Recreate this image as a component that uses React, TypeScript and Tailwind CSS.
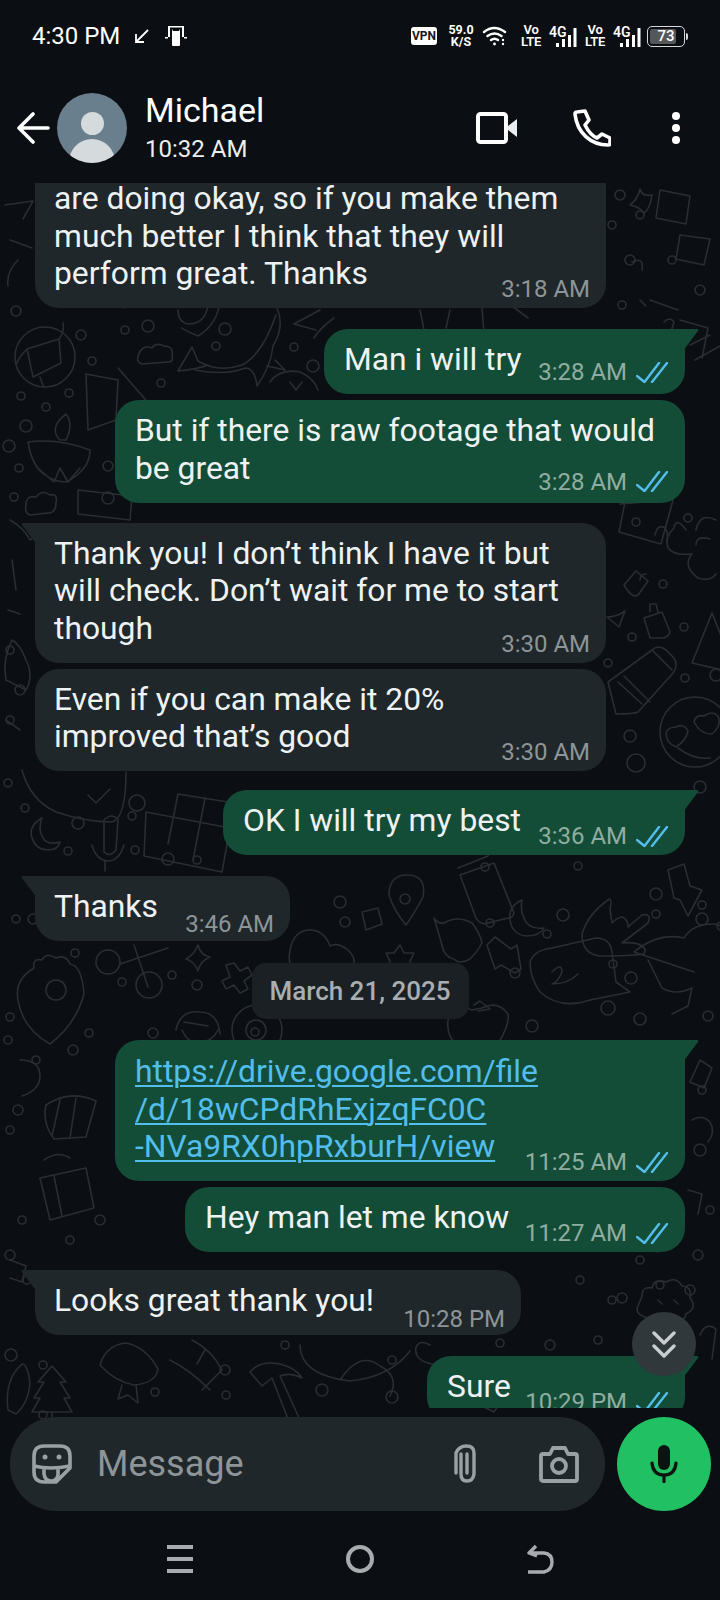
import { ReactNode } from 'react';

const rings: [number, number, number][] = [
  [16, 311, 5], [81, 335, 5], [92, 361, 4], [148, 326, 6], [125, 330, 4], [161, 383, 4], [225, 329, 6], [216, 346, 4], [294, 347, 4], [313, 366, 6],
  [21, 396, 4], [69, 393, 4], [46, 407, 4], [26, 426, 6], [9, 446, 6], [19, 468, 4], [14, 497, 4], [108, 466, 5], [108, 498, 6],
  [8, 783, 4], [25, 808, 4], [78, 823, 6], [68, 851, 4], [137, 803, 8], [132, 816, 4], [135, 850, 4], [168, 859, 6], [197, 860, 4],
  [16, 919, 4], [33, 919, 5], [75, 953, 4], [340, 902, 6], [345, 922, 5], [122, 982, 4], [172, 975, 4], [197, 985, 5], [10, 1017, 4], [89, 1033, 4], [73, 1050, 5],
  [8, 1040, 4], [153, 1033, 5], [255, 1032, 4], [485, 867, 4], [578, 866, 4], [563, 915, 6], [547, 934, 4], [490, 923, 4], [656, 894, 6], [656, 914, 4], [702, 919, 6], [702, 905, 4],
  [613, 964, 4], [631, 978, 6], [515, 973, 5], [708, 1016, 5], [608, 1008, 7], [640, 1019, 6], [532, 1026, 6], [721, 926, 4], [673, 1050, 4],
  [636, 522, 4], [688, 518, 4], [663, 584, 4], [684, 627, 4], [632, 637, 4], [608, 663, 4], [685, 678, 4], [630, 736, 6], [636, 763, 9], [700, 787, 6], [716, 675, 6],
  [612, 1300, 4], [690, 1290, 5], [550, 1345, 5], [598, 1340, 4], [622, 1298, 5], [11, 1355, 6], [43, 1365, 4], [43, 1415, 4], [155, 1392, 4], [225, 1370, 5], [226, 1395, 4], [285, 1345, 4],
  [322, 1390, 6], [392, 1397, 6], [518, 1370, 4], [392, 1360, 4], [500, 1343, 4], [27, 1280, 4], [10, 1255, 5], [10, 1130, 4], [36, 1060, 4], [18, 1110, 5], [100, 1220, 5], [22, 1220, 4], [70, 1240, 4],
  [702, 1090, 4], [700, 1150, 6], [710, 1210, 4], [698, 1255, 5], [660, 1285, 4], [580, 1280, 4], [640, 1260, 4], [620, 195, 5], [640, 215, 4], [630, 260, 5], [672, 260, 4], [700, 290, 5],
  [612, 225, 4], [622, 305, 4], [10, 650, 4], [20, 690, 5], [10, 720, 4],
];

const doodles = [
  // globe
  'M15 357a30 30 0 1 0 60 0a30 30 0 1 0-60 0M27 349l32-10M27 349l6 28 M33 377l28-14M59 339l2 24M27 349q-8 8-10 14M59 339q6-8 4-16M40 377q2 6 4 10',
  // whale
  'M178 371l14-24l6 14q20 12 44 4q20-10 34-50M178 371q20-2 30-6M195 370q30 6 50-2q10 0 12 18q14-20 16-40q12-20 4-38M275 360l10 10l-18-4',
  // sail + cloud
  'M138 356q4-12 14-8q4-6 12-2q10 0 8 10q2 6-4 6l-26 2q-6-2-4-8z',
  'M86 374l32 6l-2 40l-28 10z M118 368l40 46l-40 6',
  // lamp
  'M28 442q30-4 62 8q0 20-24 32q-12 0-22-8q-12-8-16-32zM60 440q-12-12 6-26q8 10 0 26zM40 470l14 12l6-14l8 14l12-14',
  // cloud + ticket
  'M26 505q0-10 10-8q6-8 14-2q8-2 6 8q0 10-8 10l-18 2q-6-2-4-10z',
  'M78 490l54 6l-2 24l-52-6z',
  // moon, mic, grid
  'M42 818q-14 8-10 20q4 12 16 12q10 0 12-8q-14 4-18-6q-4-8 0-18z',
  'M104 820q8-8 14 0l-2 30q-6 8-12 2zM92 845q4 16 18 16q10-2 14-16M105 861v10',
  'M146 812l84 16l-8 44l-78-16zM178 794l-10 50M205 798l-12 62M178 794l50 8',
  // blob with check
  'M22 770q8 30 34 42q30 10 56 10q14-4 14-50M88 795l8 8l14-14',
  // paw + shield
  'M18 1000q-4-20 16-32q-2-10 8-8q4-8 14-2q10-4 14 6q12 2 14 30q-8 30-34 50q-28-16-32-44z',
  'M46 990a10 10 0 1 0 20 0a10 10 0 1 0-20 0',
  // scissors
  'M96 962a12 12 0 1 0 24 0a12 12 0 1 0-24 0M120 964l48-16M134 945l14 42M136 985a13 13 0 1 0 26 0a13 13 0 1 0-26 0',
  // sparkle + cross
  'M198 945q2 10 12 12q-10 4-12 14q-4-10-12-12q8-4 12-14z',
  'M226 965l8-2l6 8l8-4l4 8l-8 6l4 8l-8 4l-6-8l-8 4l-4-8l8-4z',
  // face
  'M176 1030q4-20 24-18q18 0 20 22M182 1030q6 14 18 12q12 0 18-12M184 1022l24 4',
  'M232 1030a20 20 0 1 0 50 0a20 20 0 1 0-50 0M246 1030a10 10 0 1 0 20 0a10 10 0 1 0-20 0',
  // dumplings
  'M290 950q4-20 20-20q14 0 20 16q8-4 18 4q10 10 4 18l-50 6q-16-4-12-24z',
  // pin, bottle, gift, star
  'M389 895q0-20 18-20q20 0 16 22q-6 12-17 28q-12-14-17-30zM400 899a5 5 0 1 0 10 0a5 5 0 1 0-10 0',
  'M460 875l34-12l20 50q-2 6-6 5l-24 6q-6-2-8-6zM458 868l30-12q2-4 0-6',
  'M434 918q4 6 10 5q14-8 28 0q8 10 10 20q-4 8-12 16q-10 6-16 0q-10-2-12-14q-4-14-8-27z',
  'M400 945l4 8h10l-4 8l4 8h-10l-4 8l-6-8h-8l4-8l-4-8h8z',
  'M362 912l16-4l4 16l-16 6z',
  // moon, rock hand
  'M522 900q-14 6-12 20q2 14 16 16q14 0 18-8q-16 2-20-10q-4-8-2-18z',
  'M608 900q-20 14-26 34q0 20 18 22q30 0 44-2q4-6-6-10q-8-2-16-1l26-20q4-10-6-8l-14 12q0-8-6-10q-4 0-10 6l-2-14q2-8 0-10z',
  // lightning
  'M668 870l16-6l6 22l12 4l-14 26l-8-16l-6-2z',
  // cap head
  'M634 952q24-20 50-14q8-14 30-14q10 0 12 16M634 952l60 20M648 960l14 28q14 8 30 0l-4 18l-16 8',
  // pin tack
  'M487 945l8-8l16 12l6-4l4 24l-6 4l-14-8l-6 4z',
  // speech
  'M530 962q4-12 22-14l44-10q14 0 16 14l4 30l14 10l-40 8q-30 10-50-8q-10-14-10-30z M552 972q10-10 10 0q-4 10-10 12q16 0 26-10',
  // apple
  'M472 1010q-16-8-24 10q-2 20 14 28q10 0 14-4q10 8 22 0q12-20 10-30q-10-14-26-6zM474 1005l6-4l10 8l-12 2',
  // house
  'M625 502l-6 30l42 12l12-44M655 535q2-10 8-8q6 2 4 16M620 504l50-4',
  // flower
  'M686 530q-10-14-12-2q-10 10-6 20q6 8 24 6q-10 12 6 24q12 4 18-4M696 530q4-18 20-10M696 545q0-10 14-6',
  // lock + perfume
  'M624 585l12-14l12 10l-10 14q-6 4-14-10zM640 580q0-6 6-6',
  'M644 618l18-6l8 20q-2 6-8 6l-12 0zM650 612v-8h6l2 8',
  'M607 617q10 0 18-6l-6 16z',
  // pencil
  'M608 682l44-32q6-6 14 0l8 8q4 6 0 14l-36 40q-4 2-22 2zM618 682l24 22M624 676l26 26M652 650l20 20',
  // smile hearts
  'M660 732a35 35 0 1 0 70 0a35 35 0 1 0-70 0M666 733q2-6 10-6q8-4 12 4q-2 10-12 16q-10-4-10-14zM694 722q2-8 10-6q8-6 14 0q4 10-6 18q-12 0-18-12zM678 748q16 12 32 10',
  // triangle
  'M692 663l20-50l24 60z',
  // shrimp, tree, hammer
  'M100 1365q6-20 26-22q20 4 32 26q-2 14-24 16q-20-4-34-20zM122 1385l-4 14l10-4l10 8l-2-18',
  'M38 1382l14-16l14 16h-6l10 16h-6l8 14h-40l8-14h-6l10-16h-6zM52 1412v6',
  'M250 1372q10-12 30-8q16 4 22 14q-12-6-22-2l20 44l-10 4l-18-46l-10 8z',
  'M192 1340q20 10 30 30l-20 20M205 1350l-8 14M170 1360q20 10 40 30',
  'M8 1410q-4-30 14-46q6 0 8 20q-2 20-14 30z',
  'M340 1380q20-30 40-14q20 10 10 30M300 1345q0 30 50 36q40-4 60-30',
  'M430 1345q-10-6-14 2q-2 12 12 16q10 4 20-4',
  'M470 1400l24-36l24 12l-24 36z',
  'M642 1296q0-10 10-8q2-10 14-6q10-6 16 4q10 0 8 12q8 10-4 16q-2 10-14 8q-14 10-24-4q-14-4-10-12z',
  'M658 1300l4 4M674 1300l4 4M662 1316q8 4 14 0',
  'M700 1335q6-14 16-6l-4 30',
  // taco + book left side
  'M46 1105q24-16 50-4l-10 36l-32 2q-12-16-8-34zM60 1100l-8 36M76 1098l-6 40',
  'M40 1178l46-10l8 40l-44 12zM54 1176l8 40M44 1160q14-10 26-2',
  'M20 1060q20 0 20 16q0 14-18 20',
  'M10 1260l16 6l-4 16l-12-4',
  // right side
  'M700 1060l12 8l-8 20l-14-6zM640 1050l10 4l2 10',
  'M692 1120q10-6 18 2q6 10-2 20',
  'M630 1205q14-12 24-4l8 12q-4 10-14 12q-14-6-18-20zM688 1190l14 4l-4 20',
  'M650 1240l16-6l4 12l-14 6z',
  // top band
  'M5 205l28-4l-10 18M10 240l22 8M18 260q-12 12-10 26M660 190l30 6l-4 28l-30-6zM680 235l30 4l-6 26l-28-6zM632 262q12-6 10 8M652 195q-2 14-8 18q-4-6-14-8q8-6 10-16q2 8 12 6z',
  'M680 320l28 8l-6 30M650 300l28 10M610 345q8 4 14-10M664 322q6-6 10 0l-6 20M690 345l20-10M695 360l25-14',
  'M220 300q-2 24-22 36q-14-6-16-8M178 310q0 12 10 14q18 0 20-20M334 318q-14 10-20 20M120 300l4 8l14-6M320 310l-26 14l22 6',
  'M270 382q10-14 30-10q14 6 18 18M290 382l6 8l6-8',
  'M420 310l4 20M450 310l-4 18M482 308l2 26M512 306l16 12',
  // middle strip
  'M30 540l14-10M10 520q14 8 20 20M12 640q-10 20-6 40l20 10q8-14 0-30q-6-16-14-20zM6 720l14 10M12 560l4 30M8 610l12 4',
  'M615 340l8 6M640 300l6 6',
];

function Doodles() {
  return (
    <svg
      className="absolute left-0 top-0 h-[1336px] w-[720px]"
      viewBox="0 183 720 1336"
      fill="none"
      stroke="#2a2e31"
      strokeWidth={1.6}
      strokeLinecap="round"
      strokeLinejoin="round"
    >
      {rings.map(([cx, cy, r], i) => (
        <circle key={i} cx={cx} cy={cy} r={r} />
      ))}
      {doodles.map((d, i) => (
        <path key={i} d={d} />
      ))}
    </svg>
  );
}

function Ticks() {
  return (
    <svg className="ml-[9px] h-[21px] w-[32px] shrink-0" viewBox="0 0 32 21" fill="none" stroke="#53bdeb" strokeWidth={2.4} strokeLinecap="round" strokeLinejoin="round">
      <path d="M1 14l7.5 6L23 1" />
      <path d="M16 20L31 1" />
    </svg>
  );
}

function Tail({ out }: { out?: boolean }) {
  if (out) {
    return (
      <svg className="absolute -right-[14px] top-0 h-[24px] w-[24px]" viewBox="0 0 24 24" fill="#144d37">
        <path d="M0 0h22q2 0 1 2L8 22q-4 3-8 2z" />
      </svg>
    );
  }
  return (
    <svg className="absolute -left-[14px] top-0 h-[24px] w-[24px]" viewBox="0 0 24 24" fill="#1f272a">
      <path d="M24 0H2Q0 0 1 2l15 20q4 3 8 2z" />
    </svg>
  );
}

function Bubble({
  out,
  tail,
  className,
  timeClass = 'mb-[4px]',
  time,
  children,
}: {
  out?: boolean;
  tail?: boolean;
  className: string;
  timeClass?: string;
  time: string;
  children: ReactNode;
}) {
  return (
    <div
      className={`relative flex shrink-0 items-end justify-between rounded-[24px] ${out ? 'ml-auto mr-[35px] bg-[#144d37] pl-5 pr-[17px]' : 'ml-[35px] bg-[#1f272a] pl-[19px] pr-[16px]'} ${tail ? (out ? 'rounded-tr-none' : 'rounded-tl-none') : ''} ${className}`}
    >
      {tail && <Tail out={out} />}
      <div className="min-w-0 flex-1 whitespace-nowrap pb-[15.5px] pt-3 text-[31.8px] leading-[37.5px] text-[#eef2f3]">{children}</div>
      <div className={`flex shrink-0 items-center ${timeClass}`}>
        <span className={`text-[24px] leading-[30px] ${out ? 'text-[#8fada1]' : 'text-[#8d9598]'}`}>{time}</span>
        {out && <Ticks />}
      </div>
    </div>
  );
}

function StatusBar() {
  return (
    <div className="flex h-[72px] items-center pl-[32px] pr-[32px] text-white">
      <span className="text-[24px] leading-none">4:30 PM</span>
      <svg className="ml-[14px] h-[16px] w-[16px]" viewBox="0 0 16 16" fill="none" stroke="white" strokeWidth={1.8}>
        <path d="M14 2L2 14M2 6v8h8" />
      </svg>
      <svg className="ml-[15px] h-[22px] w-[22px]" viewBox="0 0 22 22" fill="white">
        <path d="M3 1h16v1.5H3zM3 1h2v11H3zM17 1h2v11h-2zM0 12h3v1.5H0zM19 12h3v1.5h-3z" />
        <path d="M7 4l1 2h6l1-2v16q0 1-1 1H8q-1 0-1-1z" />
      </svg>
      <div className="ml-auto flex items-center">
        <span className="flex h-[18px] w-[26px] items-center justify-center rounded-[3px] bg-white text-[12px] font-bold leading-none text-[#15181b]">VPN</span>
        <div className="ml-[11px] w-[26px] text-center text-[12.5px] font-bold leading-[12px]">
          59.0
          <br />
          K/S
        </div>
        <svg className="ml-[8px] h-[20px] w-[25px]" viewBox="0 0 25 20" fill="none" stroke="white" strokeWidth={2.4} strokeLinecap="round">
          <path d="M2 6q10-8 21 0M5.5 10q7-5 14 0M9 14q3.5-2.5 7 0" />
          <circle cx={12.5} cy={18} r={1.4} fill="white" stroke="none" />
          <circle cx={21} cy={14} r={1.2} fill="white" stroke="none" />
          <circle cx={21} cy={18} r={1.2} fill="white" stroke="none" />
        </svg>
        <Signal className="ml-[14px]" />
        <Signal className="ml-[8px]" />
        <div className="ml-[6px] flex items-center">
          <div className="relative flex h-[21px] w-[38px] items-center rounded-[5px] border-[1.5px] border-[#d5d7d9] p-[2px]">
            <div className="h-full w-[26px] rounded-[2px] bg-[#55585b]" />
            <span className="absolute inset-0 flex items-center justify-center text-[15px] font-medium leading-none">73</span>
          </div>
          <div className="ml-[1px] h-[7px] w-[2px] rounded-r-sm bg-[#d5d7d9]" />
        </div>
      </div>
    </div>
  );
}

function Signal({ className }: { className: string }) {
  return (
    <div className={`flex items-end ${className}`}>
      <div className="w-[20px] text-center text-[13px] font-semibold leading-[12px] tracking-[-0.3px]">
        Vo
        <br />
        LTE
      </div>
      <div className="relative ml-[8px] h-[22px] w-[28px]">
        <span className="absolute left-0 top-0 text-[14px] font-semibold leading-[13px]">4G</span>
        <svg className="absolute bottom-0 right-0 h-[21px] w-[22px]" viewBox="0 0 22 21" fill="white">
          <rect x={1} y={16} width={3} height={4} />
          <rect x={7} y={12} width={3} height={8} />
          <rect x={13} y={8} width={3} height={12} />
          <rect x={18.5} y={1} width={3} height={19} />
        </svg>
      </div>
    </div>
  );
}

function Header() {
  return (
    <div className="flex h-[111px] items-start text-white">
      <svg className="ml-[17px] mt-[40px] h-[32px] w-[33px] shrink-0" viewBox="0 0 33 32" fill="none" stroke="white" strokeWidth={3.6} strokeLinecap="round" strokeLinejoin="round">
        <path d="M31 16H3M16 2L2 16l14 14" />
      </svg>
      <div className="relative ml-[7px] mt-[21px] h-[70px] w-[70px] shrink-0 overflow-hidden rounded-full bg-[#6a7f8d]">
        <div className="mx-auto mt-[19px] h-[23px] w-[23px] rounded-full bg-[#d5dadd]" />
        <div className="mx-auto mt-[4px] h-[40px] w-[46px] rounded-t-full bg-[#d5dadd]" />
      </div>
      <div className="ml-[18px] mt-[19px] flex flex-col">
        <span className="text-[34px] leading-[39px]">Michael</span>
        <span className="text-[24px] leading-[38px] text-[#eceeef]">10:32 AM</span>
      </div>
      <div className="ml-auto flex items-start">
        <svg className="mt-[40px] h-[32px] w-[41px]" viewBox="0 0 41 32" fill="none">
          <rect x={2} y={2} width={28} height={28} rx={2.5} stroke="white" strokeWidth={4} />
          <path d="M32 14l9-7v18l-9-7z" fill="#e8eef0" />
        </svg>
        <svg className="ml-[56px] mt-[37px] h-[38px] w-[38px]" viewBox="0 0 38 38" fill="none" stroke="white" strokeWidth={3.6} strokeLinejoin="round">
          <path d="M2 5q0-2 2-2l8-1l4 9l-4 5q5 10 12 13l5-4l8 4v6q0 1-2 1C18 36 4 24 2 5z" />
        </svg>
        <div className="ml-[61px] mr-[40px] mt-[40px] flex flex-col gap-[4px]">
          <div className="h-[8px] w-[8px] rounded-full bg-white" />
          <div className="h-[8px] w-[8px] rounded-full bg-white" />
          <div className="h-[8px] w-[8px] rounded-full bg-white" />
        </div>
      </div>
    </div>
  );
}

function Composer() {
  return (
    <div className="relative flex h-[94px] shrink-0 items-center pl-[10px]">
      <div className="flex h-full w-[595px] items-center rounded-[46px] bg-[#1f272a] text-[#8d9598]">
        <svg className="ml-[22px] h-[40px] w-[40px] shrink-0" viewBox="0 0 40 40" fill="none" stroke="#9aa1a4" strokeWidth={3.6} strokeLinejoin="round">
          <path d="M12 2h16q10 0 10 10v12L24 38H12Q2 38 2 28V12Q2 2 12 2z" />
          <path d="M2 22q16 4 36 0M12 24v6q1 7 7 7t7-6v-7" />
          <circle cx={13} cy={13} r={2.5} fill="#9aa1a4" stroke="none" />
          <circle cx={27} cy={13} r={2.5} fill="#9aa1a4" stroke="none" />
        </svg>
        <span className="ml-[25px] text-[36px] leading-none">Message</span>
        <svg className="ml-auto h-[40px] w-[27px] shrink-0" viewBox="0 0 27 40" fill="none" stroke="#9aa1a4" strokeWidth={3.4} strokeLinecap="round">
          <path d="M8 10v20q0 7 6 7t7-7V9q0-7-7.5-7T3 9v20" />
          <path d="M14 10v19" />
        </svg>
        <svg className="ml-[59px] mr-[26px] h-[37px] w-[40px] shrink-0" viewBox="0 0 40 37" fill="none" stroke="#9aa1a4" strokeWidth={3.8} strokeLinejoin="round">
          <path d="M2 10q0-2 2-2h7l3-6h12l3 6h7q2 0 2 2v23q0 2-2 2H4q-2 0-2-2z" />
          <circle cx={20} cy={20} r={7} />
        </svg>
      </div>
      <div className="ml-[12px] flex h-[94px] w-[94px] shrink-0 items-center justify-center rounded-full bg-[#21c063]">
        <svg className="h-[38px] w-[30px]" viewBox="0 0 30 38" fill="none" stroke="#0b1410" strokeWidth={3.2} strokeLinecap="round">
          <rect x={9} y={0} width={12} height={25} rx={6} fill="#0b1410" stroke="none" />
          <path d="M3 18q1 12 12 12t12-12M15 30v7" />
        </svg>
      </div>
    </div>
  );
}

export default function App() {
  return (
    <div className="flex h-[1600px] w-[720px] flex-col overflow-hidden bg-[#0b0e12] font-['Roboto',sans-serif]">
      <StatusBar />
      <Header />
      <div className="relative h-[1336px] shrink-0 bg-[#0b0e12]">
        <Doodles />
        <div className="relative flex h-[1225px] flex-col [clip-path:inset(-8px_0_0_0)]">
          <Bubble className="h-[125px] w-[571px] rounded-t-none" time="3:18 AM">
            <div className="-mt-[16px]">
              are doing okay, so if you make them
              <br />
              much better I think that they will
              <br />
              perform great. Thanks
            </div>
          </Bubble>
          <Bubble out tail className="mt-[21px] w-[361px]" timeClass="mb-[7px]" time="3:28 AM">
            Man i will try
          </Bubble>
          <Bubble out className="mt-[6px] w-[570px]" timeClass="mb-[6px]" time="3:28 AM">
            But if there is raw footage that would
            <br />
            be great
          </Bubble>
          <Bubble tail className="mt-[20px] w-[571px]" time="3:30 AM">
            Thank you! I don’t think I have it but
            <br />
            will check. Don’t wait for me to start
            <br />
            though
          </Bubble>
          <Bubble className="mt-[6px] w-[571px]" time="3:30 AM">
            Even if you can make it 20%
            <br />
            improved that’s good
          </Bubble>
          <Bubble out tail className="mt-[19px] w-[462px]" time="3:36 AM">
            OK I will try my best
          </Bubble>
          <Bubble tail className="mt-[21px] w-[255px]" timeClass="mb-[2px]" time="3:46 AM">
            Thanks
          </Bubble>
          <div className="mx-auto mt-[22px] flex h-[56px] w-[217px] shrink-0 items-center justify-center rounded-[14px] bg-[#1a2023] text-[26px] font-medium text-[#a8aeb1]">
            March 21, 2025
          </div>
          <Bubble out tail className="mt-[21px] h-[141px] w-[570px]" time="11:25 AM">
            <span className="text-[#53bdeb] underline decoration-[1.5px] underline-offset-[3px]">
              https://drive.google.com/file
              <br />
              /d/18wCPdRhExjzqFC0C
              <br />
              -NVa9RX0hpRxburH/view
            </span>
          </Bubble>
          <Bubble out className="mt-[6px] w-[500px]" time="11:27 AM">
            Hey man let me know
          </Bubble>
          <Bubble tail className="mt-[18px] w-[486px]" timeClass="mb-[1px]" time="10:28 PM">
            Looks great thank you!
          </Bubble>
          <Bubble out tail className="mt-[21px] w-[258px]" time="10:29 PM">
            Sure
          </Bubble>
        </div>
        <div className="absolute left-[632px] top-[1129px] flex h-[64px] w-[64px] items-center justify-center rounded-full bg-[#31383c]">
          <svg className="h-[27px] w-[24px]" viewBox="0 0 24 27" fill="none" stroke="#c8cdd0" strokeWidth={3.4} strokeLinecap="round" strokeLinejoin="round">
            <path d="M2 2l10 10L22 2M2 15l10 10 10-10" />
          </svg>
        </div>
        <div className="mt-[9px]">
          <Composer />
        </div>
      </div>
      <div className="flex flex-1 items-center justify-between pb-[2px] pl-[167px] pr-[166px]">
        <div className="flex w-[26px] flex-col gap-[8px]">
          <div className="h-[4px] bg-[#a9acae]" />
          <div className="h-[4px] bg-[#a9acae]" />
          <div className="h-[4px] bg-[#a9acae]" />
        </div>
        <div className="h-[28px] w-[28px] rounded-full border-[4px] border-[#a9acae]" />
        <svg className="h-[30px] w-[27px]" viewBox="0 0 27 30" fill="none" stroke="#a9acae" strokeWidth={3.4} strokeLinejoin="round">
          <path d="M9 2L2 9l8 3M3 9h14q8 1 8 9t-8 10H1" />
        </svg>
      </div>
    </div>
  );
}
